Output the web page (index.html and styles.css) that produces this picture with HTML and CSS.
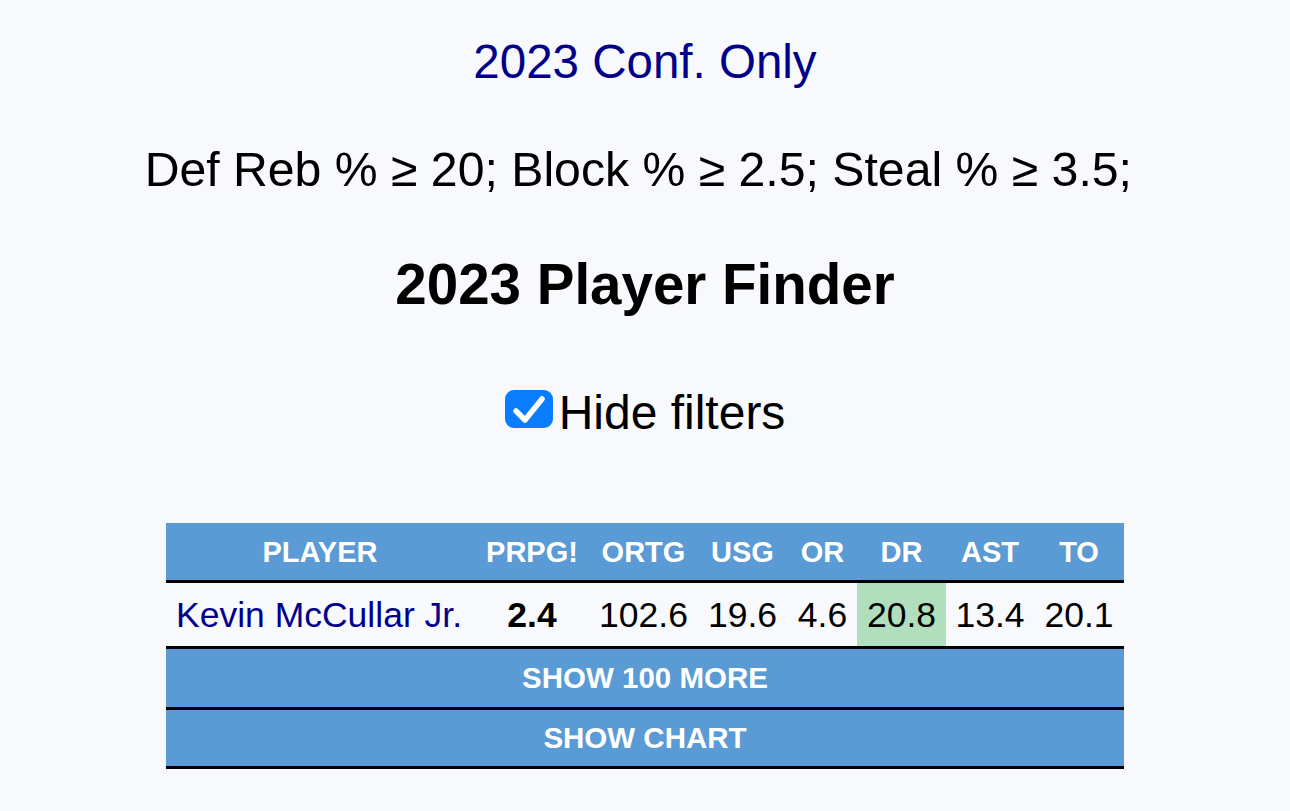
FILE: index.html
```html
<!DOCTYPE html>
<html lang="en">
<head>
<meta charset="utf-8">
<title>2023 Player Finder</title>
<link rel="stylesheet" href="styles.css">
</head>
<body>
<main class="page">
  <a class="conf-link" href="#">2023 Conf. Only</a>
  <p class="filters">Def Reb % ≥ 20; Block % ≥ 2.5; Steal % ≥ 3.5;&nbsp;</p>
  <h1 class="title">2023 Player Finder</h1>
  <label class="hide-filters">
    <span class="checkbox" aria-hidden="true">
      <svg viewBox="0 0 48 38" width="48" height="38"><path d="M11 21 L20 30 L37 9" fill="none" stroke="#fff" stroke-width="5.5" stroke-linecap="round" stroke-linejoin="round"/></svg>
    </span>
    <span class="hide-label">Hide filters</span>
  </label>
  <table class="results">
    <colgroup>
      <col class="c-player"><col class="c-prpg"><col class="c-ortg"><col class="c-usg"><col class="c-or"><col class="c-dr"><col class="c-ast"><col class="c-to">
    </colgroup>
    <thead>
      <tr class="head-row">
        <th>PLAYER</th><th>PRPG!</th><th>ORTG</th><th>USG</th><th>OR</th><th>DR</th><th>AST</th><th>TO</th>
      </tr>
    </thead>
    <tbody>
      <tr class="data-row">
        <td class="name"><a href="#">Kevin McCullar Jr.</a></td>
        <td class="prpg">2.4</td>
        <td>102.6</td>
        <td>19.6</td>
        <td>4.6</td>
        <td class="good">20.8</td>
        <td>13.4</td>
        <td>20.1</td>
      </tr>
      <tr class="btn-row more">
        <td colspan="8">SHOW 100 MORE</td>
      </tr>
      <tr class="btn-row chart">
        <td colspan="8">SHOW CHART</td>
      </tr>
    </tbody>
  </table>
</main>
</body>
</html>
```
FILE: styles.css
```css
html, body {
  margin: 0;
  padding: 0;
  background: #f8f9fd;
}

body {
  font-family: "Liberation Sans", Arial, Helvetica, sans-serif;
  color: #000;
}

.page {
  display: flex;
  flex-direction: column;
  align-items: center;
  padding-top: 32px;
  text-align: center;
}

.conf-link {
  display: block;
  font-size: 47.5px;
  line-height: 60px;
  color: #00008b;
  text-decoration: none;
}

.filters {
  margin: 47px 0 0;
  font-size: 48.2px;
  line-height: 60px;
}

.title {
  margin: 56px 0 0;
  font-size: 56.5px;
  line-height: 60px;
  font-weight: bold;
}

.hide-filters {
  margin-top: 68px;
  display: flex;
  align-items: center;
  gap: 6px;
  height: 60px;
}

.checkbox {
  display: block;
  width: 48px;
  height: 38px;
  border-radius: 9px;
  background: #0a7cff;
  margin-top: -8px;
}

.checkbox svg {
  display: block;
}

.hide-label {
  font-size: 48px;
  line-height: 60px;
}

.results {
  margin-top: 80px;
  width: 958px;
  table-layout: fixed;
  border-collapse: separate;
  border-spacing: 0;
}

.c-player { width: 308px; }
.c-prpg { width: 116px; }
.c-ortg { width: 107px; }
.c-usg { width: 91px; }
.c-or { width: 69px; }
.c-dr { width: 89px; }
.c-ast { width: 88px; }
.c-to { width: 90px; }

.results th,
.results td {
  padding: 0;
  border-bottom: 3px solid #000;
  text-align: center;
  white-space: nowrap;
}

.head-row th {
  background: #5b9bd5;
  color: #fff;
  font-size: 29px;
  font-weight: bold;
  padding-top: 1px;
  line-height: 56px;
}

.data-row td {
  font-size: 35.5px;
  line-height: 61px;
  padding-top: 2px;
}

.data-row .name {
  text-align: left;
  padding-left: 10px;
}

.data-row .name a {
  color: #00008b;
  text-decoration: none;
}

.data-row .prpg {
  font-weight: bold;
}

.data-row .good {
  background: #b1dfbd;
}

.btn-row td {
  background: #5b9bd5;
  color: #fff;
  font-size: 29.5px;
  font-weight: bold;
}

.btn-row.more td {
  line-height: 58px;
}

.btn-row.chart td {
  line-height: 56px;
}
```
